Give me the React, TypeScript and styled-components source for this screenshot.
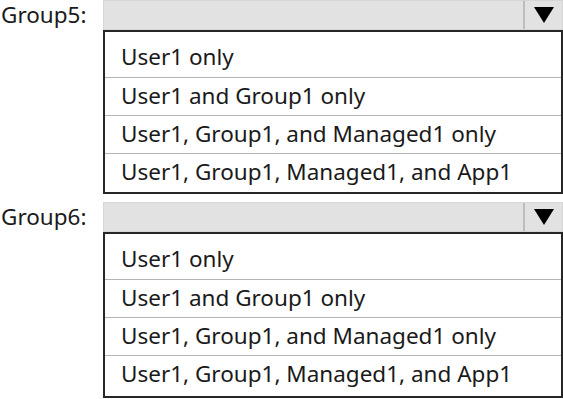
import React from "react";
import styled, { createGlobalStyle } from "styled-components";

const Global = createGlobalStyle`
  html, body { margin: 0; padding: 0; background: #ffffff; }
  body { font-family: "Noto Sans", "Open Sans", sans-serif; color: #1a1a1a; }
`;

const Page = styled.div`
  width: 563px;
  height: 399px;
  display: flex;
  flex-direction: column;
  gap: 8px;
  overflow: hidden;
`;

const Group = styled.div`
  display: grid;
  grid-template-columns: 103px 1fr;
  align-items: start;
`;

const Label = styled.div`
  height: 30px;
  display: flex;
  align-items: center;
  padding-left: 1px;
  padding-bottom: 2px;
  box-sizing: border-box;
  font-size: 22.5px;
  color: #1a1a1a;
  white-space: nowrap;
`;

const Control = styled.div`
  display: flex;
  flex-direction: column;
  min-width: 0;
`;

const Combo = styled.div`
  height: 30px;
  display: flex;
  background: #e2e2e2;
  border: 1px solid #d6d6d6;
  box-sizing: border-box;
`;

const ComboField = styled.div`
  flex: 1;
`;

const ArrowButton = styled.div`
  width: 37px;
  border-left: 2px solid #bdbdbd;
  display: flex;
  align-items: center;
  justify-content: center;
`;

const List = styled.div<{ $padBottom: number }>`
  border: 2px solid #262626;
  padding-top: 7px;
  padding-bottom: ${(p) => p.$padBottom}px;
  display: flex;
  flex-direction: column;
`;

const Option = styled.div`
  height: 38px;
  box-sizing: border-box;
  display: flex;
  align-items: center;
  padding-left: 16px;
  padding-bottom: 3px;
  font-size: 22.5px;
  color: #1a1a1a;
  white-space: nowrap;
  & + & {
    border-top: 1px solid #b4b4b4;
  }
`;

const options = [
  "User1 only",
  "User1 and Group1 only",
  "User1, Group1, and Managed1 only",
  "User1, Group1, Managed1, and App1",
];

const Arrow = () => (
  <svg width="20" height="16" viewBox="0 0 20 16">
    <polygon points="0,0 20,0 10,16" fill="#000" />
  </svg>
);

const Dropdown = ({ label, padBottom }: { label: string; padBottom: number }) => (
  <Group>
    <Label>{label}</Label>
    <Control>
      <Combo>
        <ComboField />
        <ArrowButton>
          <Arrow />
        </ArrowButton>
      </Combo>
      <List $padBottom={padBottom}>
        {options.map((o) => (
          <Option key={o}>{o}</Option>
        ))}
      </List>
    </Control>
  </Group>
);

export default function App() {
  return (
    <>
      <Global />
      <Page>
        <Dropdown label="Group5:" padBottom={1} />
        <Dropdown label="Group6:" padBottom={3} />
      </Page>
    </>
  );
}
